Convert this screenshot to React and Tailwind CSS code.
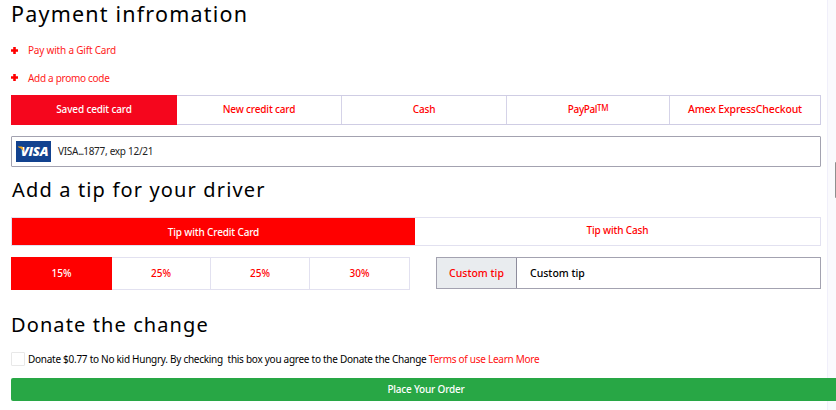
function Plus() {
  return (
    <svg className="h-[7px] w-[7px] shrink-0" viewBox="0 0 7 7">
      <path d="M3.5 0v7M0 3.5h7" stroke="#f00" strokeWidth="2.6" />
    </svg>
  );
}

function Heading({ children, className }) {
  return <h2 className={`flex items-center whitespace-nowrap leading-none text-black ${className}`}>{children}</h2>;
}

function Tab({ children, className }) {
  return <button className={`flex items-center justify-center whitespace-nowrap ${className}`}>{children}</button>;
}

function Visa() {
  return (
    <div className="relative flex h-[21px] w-[35px] items-center justify-center bg-[#12428f]">
      <span className="pl-[2px] font-['Open_Sans',sans-serif] text-[13px] leading-none font-extrabold tracking-[-0.2px] text-white italic">VISA</span>
      <svg className="absolute top-[5px] left-[2px] h-[6px] w-[6px]" viewBox="0 0 6 6">
        <path d="M0 .5h3.500q1.200 0 1.400 1.200L5.600 5.500Q3.800 2 0 1z" fill="#f5a81c" />
      </svg>
    </div>
  );
}

export default function App() {
  return (
    <div className="relative h-[410px] w-[836px] overflow-hidden bg-white font-['Noto_Sans',sans-serif] text-[10px] leading-none">
      <div className="absolute top-0 right-0 h-full w-[9px] border-l border-[#f0effa] bg-[#fafafd]">
        <div className="absolute top-[162px] right-0 h-[36px] w-px rounded-l bg-[#8f8f8f]" />
      </div>
      <main className="relative flex flex-col pl-[11px]">
        <Heading className="h-[30px] pb-[3px] text-[21.5px] tracking-[1.2px]">Payment infromation</Heading>
        <a className="mt-[10px] flex h-[20px] items-center gap-[10px] text-[#ff1a1a]">
          <Plus />
          <span className="tracking-[-0.2px]">Pay with a Gift Card</span>
        </a>
        <a className="mt-[8px] flex h-[20px] items-center gap-[10px] pb-px text-[#ff1a1a]">
          <Plus />
          <span className="tracking-[-0.3px]">Add a promo code</span>
        </a>
        <div className="mt-[7px] flex h-[30px] w-[810px] border border-[#cfcde4] font-medium tracking-[-0.15px] text-[#f00]">
          <Tab className="-my-px -ml-px w-[166px] bg-[#f5061d] pb-[2px] text-white">Saved cedit card</Tab>
          <Tab className="w-[165px] border-r border-[#d5d3e8] pb-[2px]">New credit card</Tab>
          <Tab className="w-[165px] border-r border-[#d5d3e8] pb-[2px]">Cash</Tab>
          <Tab className="w-[163px] border-r border-[#d5d3e8] pb-[2px] tracking-[-0.4px]">
            PayPal<span className="-mt-[3px] text-[8px]">TM</span>
          </Tab>
          <Tab className="flex-1 pb-px text-[10.5px]">Amex ExpressCheckout</Tab>
        </div>
        <div className="mt-[11px] flex h-[31px] w-[810px] items-center gap-[7px] rounded-[1px] border border-[#a3a2b0] pl-[4px] text-[#222]">
          <Visa />
          <span className="pb-px tracking-[-0.28px]">VISA<span className="tracking-[-1px]">...</span>1877, exp 12/21</span>
        </div>
        <Heading className="mt-[8px] h-[30px] pb-px pl-px text-[20px] tracking-[1.15px]">Add a tip for your driver</Heading>
        <div className="mt-[12px] flex h-[29px] w-[810px] border border-[#e2e1f0] font-medium tracking-[-0.15px] text-[#f00]">
          <Tab className="w-[403px] bg-[#f00] pt-px text-white">Tip with Credit Card</Tab>
          <Tab className="flex-1 pb-[3px]">Tip with Cash</Tab>
        </div>
        <div className="mt-[11px] flex items-start gap-[26px]">
          <div className="flex h-[33px] w-[399px] border border-[#e2e1f0] font-medium text-[#f00]">
            <Tab className="-my-px -ml-px w-[101px] bg-[#f00] pb-px text-white">15%</Tab>
            <Tab className="w-[99px] border-r border-[#e2e1f0] pb-px">25%</Tab>
            <Tab className="w-[99px] border-r border-[#e2e1f0] pb-px">25%</Tab>
            <Tab className="flex-1 pb-px">30%</Tab>
          </div>
          <div className="flex h-[32px] w-[385px] border border-[#a3a2b0] text-[10.5px] font-medium">
            <div className="flex w-[80px] items-center justify-center border-r border-[#8d8c9c] bg-[#e9ecef] text-[#f00]">Custom tip</div>
            <div className="flex items-center pl-[13px] text-black">Custom tip</div>
          </div>
        </div>
        <Heading className="mt-[20px] h-[30px] pb-px text-[20px] tracking-[1.1px]">Donate the change</Heading>
        <label className="mt-[11px] flex h-[15px] items-center gap-[3px] text-black">
          <span className="h-[14px] w-[14px] rounded-[1px] border border-[#e8e8e8] bg-white" />
          <span className="whitespace-pre tracking-[-0.27px]">
            {"Donate $0.77 to No kid Hungry. By checking  this box you agree to the Donate the Change "}
            <span className="text-[#ff1010]">Terms of use Learn More</span>
          </span>
        </label>
        <button className="mt-[12px] h-[23px] w-[825px] rounded-l-[2px] bg-[#28a745] pb-px pl-[5px] font-medium tracking-[-0.2px] text-white">
          Place Your Order
        </button>
      </main>
    </div>
  );
}
